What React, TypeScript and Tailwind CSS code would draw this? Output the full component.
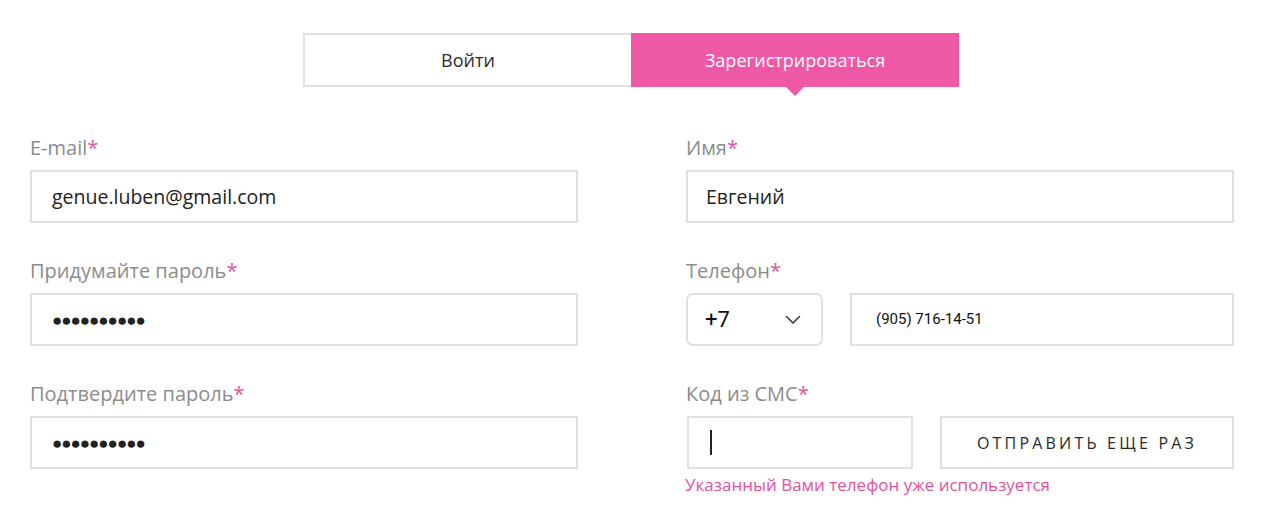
import React from "react";

const Label = ({ children }: { children: React.ReactNode }) => (
  <div className="h-6 leading-6 text-[20px] text-[#8c8c8c] mb-[10px] whitespace-nowrap">
    {children}
    <span className="text-[#e0539f]">*</span>
  </div>
);

const boxCls = "h-[53px] border-2 border-[#e0e0e0] bg-white flex items-center";

export default function App() {
  return (
    <div
      className="w-[1280px] h-[530px] bg-white overflow-hidden"
      style={{ fontFamily: '"Open Sans", "Noto Sans", sans-serif' }}
    >
      <div className="pt-[33px] pl-[303px] flex">
        <div className="w-[328px] h-[54px] border-2 border-r-0 border-[#e0e0e0] flex items-center justify-center text-[18px] text-[#2b2b2b]">
          Войти
        </div>
        <div className="relative w-[328px] h-[54px] bg-[#ee58a6] flex items-center justify-center text-[18px] text-white">
          Зарегистрироваться
          <div className="absolute left-[155px] top-[54px] w-0 h-0 border-l-[9px] border-r-[9px] border-t-[9px] border-l-transparent border-r-transparent border-t-[#ee58a6]" />
        </div>
      </div>

      <div className="mt-[49px] pl-[30px] flex gap-[108px]">
        <div className="w-[548px] flex flex-col gap-[36px]">
          <div>
            <Label>E-mail</Label>
            <div className={boxCls + " pl-[20px] text-[19.5px] text-[#222]"}>genue.luben@gmail.com</div>
          </div>
          <div>
            <Label>Придумайте пароль</Label>
            <div className={boxCls + " pl-[20px] text-[17px] text-[#222] tracking-[-1px]"}>●●●●●●●●●●</div>
          </div>
          <div>
            <Label>Подтвердите пароль</Label>
            <div className={boxCls + " pl-[20px] text-[17px] text-[#222] tracking-[-1px]"}>●●●●●●●●●●</div>
          </div>
        </div>

        <div className="w-[548px] flex flex-col gap-[36px]">
          <div>
            <Label>Имя</Label>
            <div className={boxCls + " pl-[18px] text-[19.5px] text-[#222]"}>Евгений</div>
          </div>
          <div>
            <Label>Телефон</Label>
            <div className="flex gap-[27px]">
              <div className="w-[137px] h-[53px] border-2 border-[#e0e0e0] rounded-[7px] flex items-center justify-between pl-[17px] pr-[20px]">
                <span className="text-[22px] text-[#111]" style={{ fontFamily: 'Roboto, "Open Sans", sans-serif' }}>+7</span>
                <svg width="16" height="10" viewBox="0 0 16 10" fill="none">
                  <path d="M1.5 1.5 L8 8 L14.5 1.5" stroke="#333" strokeWidth="1.5" strokeLinecap="round" strokeLinejoin="round" />
                </svg>
              </div>
              <div className={boxCls + " flex-1 pl-[24px] text-[15px] text-[#111]"} style={{ fontFamily: 'Roboto, "Open Sans", sans-serif' }}>
                (905) 716-14-51
              </div>
            </div>
          </div>
          <div className="relative">
            <Label>Код из СМС</Label>
            <div className="flex gap-[27px]">
              <div className={boxCls + " w-[226px] ml-[1px] pl-[21px]"}>
                <div className="w-[2px] h-[25px] bg-[#222]" />
              </div>
              <div className={boxCls + " flex-1 justify-center text-[16px] tracking-[3.2px] text-[#2a2a2a]"}>
                ОТПРАВИТЬ ЕЩЕ РАЗ
              </div>
            </div>
            <div className="mt-[3px] -ml-[1px] text-[17px] text-[#e0539f] whitespace-nowrap">
              Указанный Вами телефон уже используется
            </div>
          </div>
        </div>
      </div>
    </div>
  );
}
